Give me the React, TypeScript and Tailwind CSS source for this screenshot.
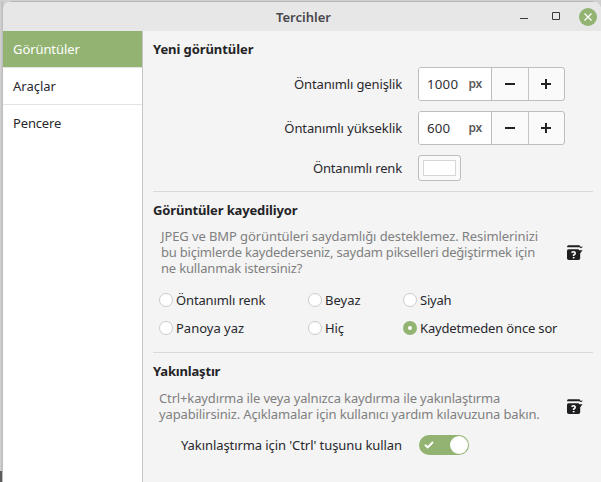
import type { ReactNode } from "react";

function HelpIcon() {
  return (
    <svg width="16" height="16" viewBox="0 0 16 16" className="block shrink-0">
      <path d="M0 2 Q0 .2 1.5 .2 H12.5 L13.5 1.8 H16 L14 3.2 L12.5 2.2 H0Z" fill="#1f1f21" />
      <path d="M1.5 4.2 H11.5 L12.3 5.2 H15.6 L13.2 8.3 V13.2 Q13.2 15 11.4 15 H1.8 Q0 15 0 13.2 V5.7 Q0 4.2 1.5 4.2Z" fill="#1f1f21" />
      <path d="M4.5 7.6 Q6.4 6.2 7.8 7.2 Q9 8.6 6.6 10.2 V11" fill="none" stroke="#fff" strokeWidth="1.6" />
      <path d="M5.8 12 H7.5 V13.4 H5.8Z" fill="#fff" />
    </svg>
  );
}

function SpinBox({ value }: { value: string }) {
  return (
    <div className="flex h-[34px] w-[147px] overflow-hidden rounded-[3px] border border-[#bdbdbd] bg-[#fafafa]">
      <div className="flex w-[73px] items-center justify-between border-r border-[#bdbdbd] bg-white pr-[9px] pl-2">
        <span className="text-[13.3px] tracking-[0.2px] text-[#303036]">{value}</span>
        <span className="text-[12px] font-semibold tracking-[-0.2px] text-[#5a5a5a]">px</span>
      </div>
      <div className="flex w-[37px] items-center justify-center border-r border-[#c5c5c5]">
        <svg width="10" height="10" viewBox="0 0 10 10"><path d="M0 4H10V6H0Z" fill="#222" /></svg>
      </div>
      <div className="flex flex-1 items-center justify-center pr-px">
        <svg width="10" height="10" viewBox="0 0 10 10"><path d="M0 4H4V0H6V4H10V6H6V10H4V6H0Z" fill="#222" /></svg>
      </div>
    </div>
  );
}

function Field({ label, className, children }: { label: string; className: string; children: ReactNode }) {
  return (
    <div className="flex items-center">
      <div className="flex w-[249px] justify-end"><span className={className}>{label}</span></div>
      <div className="ml-4">{children}</div>
    </div>
  );
}

function Radio({ label, className, checked = false }: { label: string; className: string; checked?: boolean }) {
  return (
    <div className="flex h-7 items-center gap-[3px]">
      {checked ? (
        <span className="flex size-[14px] items-center justify-center rounded-full bg-[#92b372]">
          <span className="size-1 rounded-full bg-white" />
        </span>
      ) : (
        <span className="size-[14px] rounded-full border border-[#cbcbcb] bg-white" />
      )}
      <span className={className}>{label}</span>
    </div>
  );
}

export default function App() {
  return (
    <div className="flex h-[482px] w-[601px] overflow-hidden bg-[#d0d0d0] pt-px font-['Noto_Sans','Liberation_Sans',sans-serif] text-[13px] leading-4 whitespace-nowrap text-[#28282d]">
      <div className="flex w-[3px] shrink-0 flex-col bg-[linear-gradient(to_right,#d4d4d4,#b9b9b9)]">
        <div className="mt-auto h-[11px] w-[2px] bg-[#5c5c5c]" />
      </div>
      <div className="flex h-[481px] w-[598px] flex-col overflow-hidden rounded-t-[9px] bg-[#f4f4f4]">
        <header className="flex h-[30px] shrink-0 items-center border-t border-[#b5b5b5] bg-[#e7e7e7] pl-[273px]">
          <span className="w-[60px] text-[13px] font-semibold text-[#47474d]">Tercihler</span>
          <div className="ml-auto flex items-center pr-1">
            <svg width="60" height="11" viewBox="0 0 60 11">
              <path d="M1 7H9V8H1Z" fill="#3a3a3a" />
              <path d="M33.5 1.5H40.5V8.5H33.5Z" fill="none" stroke="#3a3a3a" />
            </svg>
            <span className="flex size-[18px] items-center justify-center rounded-full bg-[#92b372]">
              <svg width="8" height="8" viewBox="0 0 8 8"><path d="M.5 .5L7.5 7.5M7.5 .5L.5 7.5" stroke="#fff" strokeWidth="1.3" /></svg>
            </span>
          </div>
        </header>
        <div className="flex flex-1">
          <nav className="w-[140px] border-r border-[#c6c6c6] bg-white">
            <div className="flex h-[37px] items-center border-b border-[#e3e3e3] bg-[#92b372] pl-[10px] text-white"><span className="tracking-[-0.08px]">Görüntüler</span></div>
            <div className="flex h-[37px] items-center border-b border-[#e3e3e3] pl-[10px]"><span>Araçlar</span></div>
            <div className="flex h-[36px] items-center pl-[10px]"><span className="tracking-[-0.15px]">Pencere</span></div>
          </nav>
          <main className="flex-1 pt-[10px] pr-2 pl-[10px]">
            <section className="h-[151px] border-b border-[#d9d9d9]">
              <h2 className="font-bold tracking-[-0.08px] text-[#232326]">Yeni görüntüler</h2>
              <div className="flex flex-col gap-[10px] pt-[10px]">
                <Field label="Öntanımlı genişlik" className="tracking-[-0.14px]"><SpinBox value="1000" /></Field>
                <Field label="Öntanımlı yükseklik" className="tracking-[-0.1px]"><SpinBox value="600" /></Field>
                <Field label="Öntanımlı renk" className="tracking-[-0.15px]">
                  <div className="h-[26px] w-[43px] rounded-[3px] border border-[#bdbdbd] bg-[#fafafa] p-1">
                    <div className="h-full border border-[#d6d6d6] bg-white" />
                  </div>
                </Field>
              </div>
            </section>
            <section className="h-[161px] border-b border-[#d9d9d9] pt-[10px]">
              <h2 className="font-bold tracking-[-0.14px] text-[#232326]">Görüntüler kayediliyor</h2>
              <div className="flex items-center justify-between pt-[10px] pr-[10px] pl-2">
                <p className="text-[#808080]">
                  <span className="block w-fit tracking-[-0.1px]">JPEG ve BMP görüntüleri saydamlığı desteklemez. Resimlerinizi</span>
                  <span className="block w-fit tracking-[-0.22px]">bu biçimlerde kaydederseniz, saydam pikselleri değiştirmek için</span>
                  <span className="block w-fit tracking-[-0.17px]">ne kullanmak istersiniz?</span>
                </p>
                <div className="pt-[2px]"><HelpIcon /></div>
              </div>
              <div className="grid grid-cols-[149px_95px_160px] pt-[10px] pl-[6px]">
                <Radio label="Öntanımlı renk" className="tracking-[-0.14px]" />
                <Radio label="Beyaz" className="tracking-[0px]" />
                <Radio label="Siyah" className="tracking-[-0.2px]" />
                <Radio label="Panoya yaz" className="tracking-[0px]" />
                <Radio label="Hiç" className="tracking-[-0.1px]" />
                <Radio label="Kaydetmeden önce sor" className="tracking-[-0.16px]" checked />
              </div>
            </section>
            <section className="pt-[10px]">
              <h2 className="font-bold tracking-[-0.18px] text-[#232326]">Yakınlaştır</h2>
              <div className="flex items-center justify-between pt-[11px] pr-[10px] pl-[6px]">
                <p className="text-[#808080]">
                  <span className="block w-fit tracking-[-0.14px]">Ctrl+kaydırma ile veya yalnızca kaydırma ile yakınlaştırma</span>
                  <span className="block w-fit tracking-[-0.14px]">yapabilirsiniz. Açıklamalar için kullanıcı yardım kılavuzuna bakın.</span>
                </p>
                <div className="pt-[2px]"><HelpIcon /></div>
              </div>
              <div className="pt-[13px]">
                <Field label="Yakınlaştırma için 'Ctrl' tuşunu kullan" className="tracking-[-0.08px]">
                  <div className="ml-px flex h-5 w-[50px] items-center justify-between rounded-full bg-[#92b372] pr-px pl-[5px]">
                    <svg width="10" height="8" viewBox="0 0 10 8"><path d="M1 3.8L3.7 6.4L9 1" fill="none" stroke="#fff" strokeWidth="2" /></svg>
                    <span className="size-[18px] rounded-full bg-white" />
                  </div>
                </Field>
              </div>
            </section>
          </main>
        </div>
      </div>
    </div>
  );
}
